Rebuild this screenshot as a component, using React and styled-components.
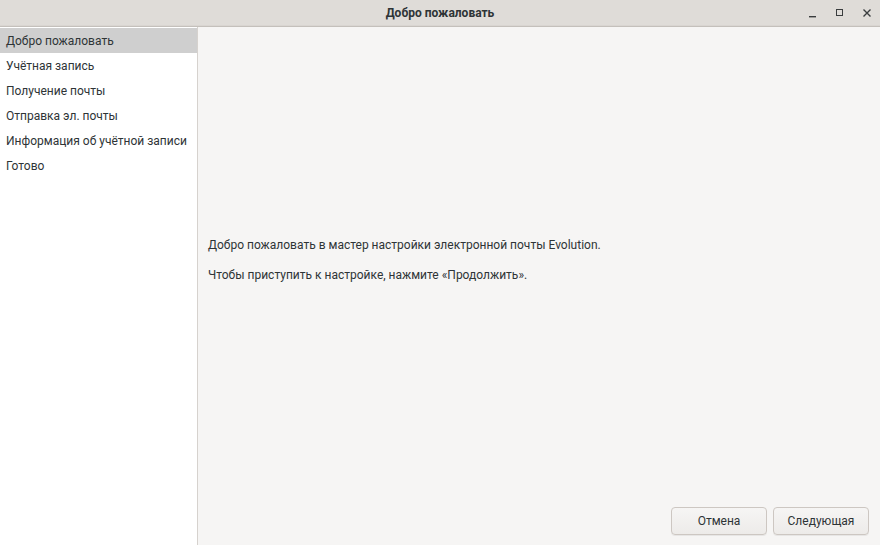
import React from 'react';
import styled, { createGlobalStyle } from 'styled-components';

const Global = createGlobalStyle`
  html, body {
    margin: 0;
    padding: 0;
    width: 880px;
    height: 545px;
    overflow: hidden;
    font-family: Roboto, "Noto Sans", sans-serif;
    font-size: 12px;
    color: #2e3436;
  }
`;

const Window = styled.div`
  width: 880px;
  height: 545px;
  display: flex;
  flex-direction: column;
  background: #f6f5f4;
`;

const TitleBar = styled.header`
  height: 26px;
  flex: none;
  display: flex;
  align-items: center;
  justify-content: center;
  position: relative;
  background: #dfdcd8;
  border-bottom: 1px solid #c4c0bb;
  box-shadow: inset 0 -1px 0 #d9d5d1;

  h1 {
    margin: 0;
    font-size: 12px;
    font-weight: 700;
    color: #2e3436;
  }
`;

const Controls = styled.div`
  position: absolute;
  right: 0;
  top: 0;
  height: 26px;
  display: flex;
  align-items: center;
`;

const Control = styled.button`
  width: 27px;
  height: 26px;
  border: 0;
  padding: 0;
  background: none;
  display: flex;
  align-items: center;
  justify-content: center;
  color: #3a3d3e;
`;

const Body = styled.div`
  flex: 1;
  display: flex;
  min-height: 0;
`;

const Sidebar = styled.nav`
  width: 197px;
  flex: none;
  background: #ffffff;
  border-right: 1px solid #d6d2ce;
  padding-top: 1px;
`;

const Step = styled.div`
  height: 25px;
  line-height: 27px;
  padding-left: 6px;
  font-size: 12px;
  white-space: nowrap;
  color: #2e3436;
  background: ${({ $active }) => ($active ? '#cfcfcf' : 'transparent')};
`;

const Main = styled.main`
  flex: 1;
  display: flex;
  flex-direction: column;
`;

const Content = styled.section`
  flex: 1;
  display: flex;
  flex-direction: column;
  justify-content: center;
  padding: 0 10px;

  p {
    margin: 0 0 14px;
    line-height: 16px;
    white-space: nowrap;
  }
`;

const Actions = styled.div`
  display: flex;
  justify-content: flex-end;
  gap: 6px;
  padding: 0 11px 10px 0;
`;

const Button = styled.button`
  width: 96px;
  height: 28px;
  border: 1px solid #cdc7c2;
  border-radius: 4px;
  background: linear-gradient(#f6f5f4, #edebe9);
  box-shadow: 0 1px 0 rgba(0, 0, 0, 0.06);
  font-family: Roboto, "Noto Sans", sans-serif;
  font-size: 12px;
  color: #2e3436;
  padding: 0;
`;

const steps = [
  'Добро пожаловать',
  'Учётная запись',
  'Получение почты',
  'Отправка эл. почты',
  'Информация об учётной записи',
  'Готово',
];

export default function App() {
  return (
    <>
      <Global />
      <Window>
        <TitleBar>
          <h1>Добро пожаловать</h1>
          <Controls>
            <Control aria-label="minimize">
              <svg width="10" height="10" viewBox="0 0 10 10">
                <rect x="1" y="8" width="7" height="1.4" fill="currentColor" />
              </svg>
            </Control>
            <Control aria-label="maximize">
              <svg width="10" height="10" viewBox="0 0 10 10">
                <rect x="1.5" y="1.5" width="6" height="6" fill="none" stroke="currentColor" strokeWidth="1" />
              </svg>
            </Control>
            <Control aria-label="close">
              <svg width="10" height="10" viewBox="0 0 10 10">
                <path d="M1.5 1.5 L8.5 8.5 M8.5 1.5 L1.5 8.5" stroke="currentColor" strokeWidth="1.4" />
              </svg>
            </Control>
          </Controls>
        </TitleBar>
        <Body>
          <Sidebar>
            {steps.map((s, i) => (
              <Step key={s} $active={i === 0}>{s}</Step>
            ))}
          </Sidebar>
          <Main>
            <Content>
              <p>Добро пожаловать в мастер настройки электронной почты Evolution.</p>
              <p>Чтобы приступить к настройке, нажмите «Продолжить».</p>
            </Content>
            <Actions>
              <Button>Отмена</Button>
              <Button>Следующая</Button>
            </Actions>
          </Main>
        </Body>
      </Window>
    </>
  );
}
